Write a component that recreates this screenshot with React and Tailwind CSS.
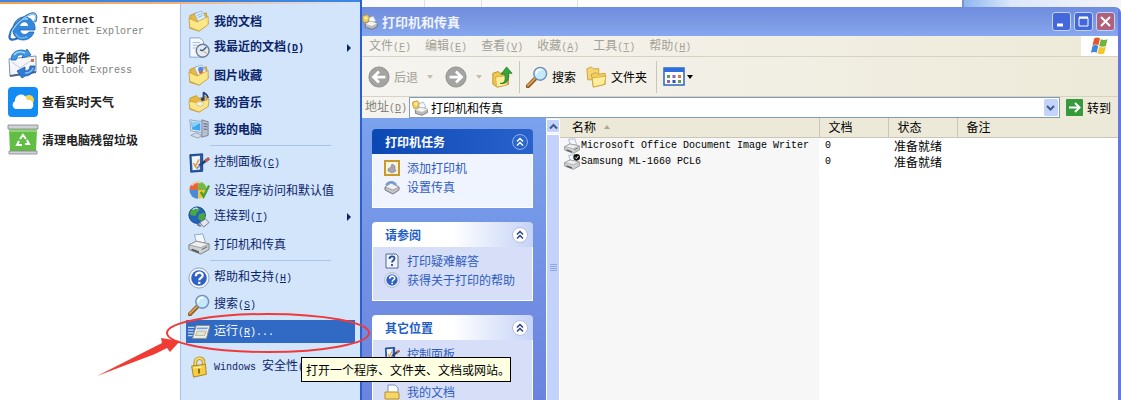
import React from 'react'

const Svg = ({ size = 22, box = 24, className = '', children }) => (
  <svg width={size} height={size} viewBox={`0 0 ${box} ${box}`} fill="none" className={`shrink-0 ${className}`} aria-hidden="true">
    {children}
  </svg>
)

const Key = ({ k }) => (
  <span className="font-['Liberation_Mono',monospace] text-[10px]">(<u>{k}</u>)</span>
)

/* ---------- icons ---------- */

const IeIcon = () => (
  <Svg size={32} box={32}>
    <path d="M28 20H13c0 5 7 6 9 2h5c-2 6-7 8-11 8C9 30 5 24 6 18 7 11 12 7 17 7c7 0 12 6 11 13z" fill="#3389dd" stroke="#1f62b4" strokeWidth=".8" />
    <path d="M13 16c1-5 8-5 8 0z" fill="#fff" />
    <path d="M8 16c2-5 6-8 12-7" stroke="#8dcbf8" strokeWidth="2" strokeLinecap="round" />
    <path d="M9 24c2 4 6 5 11 3" stroke="#6cb4f0" strokeWidth="1.500" strokeLinecap="round" />
    <path d="M28 12c3-7 0-11-7-7C13 9 5 17 3 24c-2 6 2 7 8 4" stroke="#2b6db9" strokeWidth="2.200" />
    <path d="M28 11c2-6 0-9-6-6C14 9 6 17 4 24" stroke="#9fd2f7" strokeWidth="1.200" />
  </Svg>
)

const MailIcon = () => (
  <Svg size={32} box={32}>
    <path d="M2 11l27-3v16L3 28z" fill="#f4f6fa" stroke="#7e92b0" />
    <path d="M3 28l26-4" stroke="#4d6488" strokeWidth="2" />
    <path d="M5 14l8 6 13-9" stroke="#c4ccd8" />
    <path d="M24 11h3v3h-3z" fill="#c9774c" />
    <path d="M4 12C4 6 8 2 15 2l4 1 1-2 4 6-9 3 1-3c-4-1-6 1-7 5z" fill="#3f97e8" stroke="#205fb0" strokeWidth=".8" />
    <path d="M7 7c2-3 6-4 11-2" stroke="#a5dafa" strokeWidth="1.400" />
    <path d="M28 18c0 6-5 10-10 10l-3 2-5-7 8-4v4c3 0 5-2 5-5z" fill="#2f7cd6" stroke="#1d55a0" strokeWidth=".8" />
    <path d="M26 20c-1 3-4 5-8 5" stroke="#86c2f4" strokeWidth="1.400" />
  </Svg>
)

const WeatherIcon = () => (
  <Svg size={32} box={32}>
    <rect x="1" y="1" width="30" height="30" rx="4" fill="#128cf3" />
    <circle cx="22" cy="14" r="5" fill="#f5d24a" />
    <path d="M8 23a4.500 4.500 0 0 1 0-8 6 6 0 0 1 12-1 5 5 0 0 1 4 9z" fill="#fff" />
  </Svg>
)

const CleanIcon = () => (
  <Svg size={32} box={32}>
    <path d="M2 5h28l-1 23H3z" fill="#62bd45" />
    <path d="M2 5h28v3H2z" fill="#8fd672" />
    <path d="M1 1h30v4H1z" fill="#cfd2d8" stroke="#81858d" strokeWidth=".8" />
    <path d="M2 27h28v3H2z" fill="#cfd2d8" stroke="#81858d" strokeWidth=".8" />
    <path d="M13 15l3-4 3 4M20 16l2 4h-4M15 21h-5l2-4" stroke="#fff" strokeWidth="2" />
  </Svg>
)

const Folder = ({ children }) => (
  <Svg>
    <path d="M2 6l7-3 2 3 9-3 2 12-10 8L2 20z" fill="#e9b93f" stroke="#b98a25" strokeWidth=".8" />
    {children}
    <path d="M1 9l9 4 12-6 0 9-10 7-10-4z" fill="#fbe787" stroke="#c79a30" strokeWidth=".8" />
  </Svg>
)

const DocsIcon = () => (
  <Folder>
    <path d="M7 4l8-3 5 8-8 6z" fill="#dcecfb" stroke="#86a9cf" strokeWidth=".8" />
    <path d="M10 6l5-2M11 8l5-2" stroke="#7fb3e0" />
  </Folder>
)

const PicturesIcon = () => (
  <Folder>
    <path d="M7 4l8-3 6 8-9 6z" fill="#eef5fd" stroke="#8aa6cc" strokeWidth=".8" />
    <circle cx="14" cy="6" r="3" fill="#4e8ee0" />
    <circle cx="14" cy="9" r="2" fill="#e0603a" />
  </Folder>
)

const MusicIcon = () => (
  <Svg>
    <path d="M2 8l7-3 2 3 9-2 2 10-10 7L2 20z" fill="#e9b93f" stroke="#b98a25" strokeWidth=".8" />
    <path d="M1 11l10 2 12-4-1 8-10 6-10-4z" fill="#fbe787" stroke="#c79a30" strokeWidth=".8" />
    <ellipse cx="13" cy="14" rx="4" ry="2.500" fill="#f4efe0" stroke="#cbb26a" strokeWidth=".7" />
    <path d="M17 9V1c1 3 5 2 5 7" stroke="#27407f" strokeWidth="2" />
    <circle cx="16" cy="9" r="2" fill="#27407f" />
  </Svg>
)

const RecentIcon = () => (
  <Svg>
    <path d="M2 1h11l4 4v17H2z" fill="#f5f9ff" stroke="#7f9fcb" />
    <path d="M5 6h8M5 9h6M5 12h4" stroke="#9db8dc" />
    <circle cx="16" cy="15" r="7" fill="#e4ebf3" stroke="#6e7f95" strokeWidth="1.600" />
    <path d="M16 15l4-4M16 15l-3-1" stroke="#3d5a80" strokeWidth="1.500" />
    <path d="M17 16l4 2" stroke="#e39a45" />
  </Svg>
)

const ComputerIcon = () => (
  <Svg>
    <path d="M15 2l7 2v15l-7 2z" fill="#b8c0cf" stroke="#66718a" strokeWidth=".8" />
    <path d="M17 6l4 1M17 9l4 .5M17 12l4 .5" stroke="#55607a" />
    <path d="M2 2l13 2v12L3 14z" fill="#dbe6f3" stroke="#7d93b5" strokeWidth=".8" />
    <path d="M3.500 4l10 1.500v8.500L4.500 12.500z" fill="#41a5ee" />
    <path d="M4 4l9 1.500-8 5z" fill="#8bd3fb" />
    <path d="M3 19l6-3 6 3-4 3z" fill="#d5dae3" stroke="#848da0" strokeWidth=".8" />
  </Svg>
)

const ControlIcon = ({ size = 22 }) => (
  <Svg size={size}>
    <path d="M2 3l14-1v19L3 22z" fill="#2c5ca8" stroke="#173a77" />
    <path d="M4 5l9-1v15l-8 1z" fill="#eef4fb" />
    <path d="M6 12l2 4 4-8" stroke="#dd9a35" strokeWidth="1.600" />
    <path d="M12 15l11-8" stroke="#27407f" strokeWidth="3" />
    <path d="M19 10l4-3" stroke="#d05b3c" strokeWidth="3" />
    <path d="M9 18l4-3" stroke="#8c97a8" strokeWidth="2" />
  </Svg>
)

const ProgramsIcon = () => (
  <Svg>
    <circle cx="11" cy="12" r="9.500" fill="#e6ecf4" />
    <path d="M11 12V2.500A9.500 9.500 0 0 0 1.500 12z" fill="#e4673a" />
    <path d="M11 12V2.500A9.500 9.500 0 0 1 20.500 12z" fill="#75b944" />
    <path d="M11 12v9.500A9.500 9.500 0 0 1 1.500 12z" fill="#4a8adb" />
    <path d="M11 12v9.500A9.500 9.500 0 0 0 20.500 12z" fill="#f3c43b" />
    <path d="M4 7a9 9 0 0 1 10-3" stroke="#fff" strokeOpacity=".6" strokeWidth="2" />
    <path d="M14 14l3 5 6-12" stroke="#46a037" strokeWidth="2.600" />
  </Svg>
)

const GlobeIcon = () => (
  <Svg>
    <circle cx="10" cy="10" r="9" fill="#2362bd" stroke="#173f86" />
    <path d="M4 4c4-3 7-2 9 0l-3 3-2 4-5-1-1-3zM12 9l6-2 1 5-4 5-4-3z" fill="#49a83c" />
    <path d="M5 4c2-2 4-2 6-1" stroke="#b7e6f8" strokeWidth="1.500" />
    <path d="M13 18l6-4 4 4-6 5z" fill="#e2e6ee" stroke="#6d7789" />
    <path d="M10 20l4 2" stroke="#6d7789" strokeWidth="2" />
  </Svg>
)

const PrinterIcon = ({ size = 22, checked = false }) => (
  <Svg size={size}>
    <path d="M7 2l9-1 3 9-9 3z" fill="#f2f8ff" stroke="#8ea3bd" />
    <path d="M1 13l8-4 14 3v6l-9 5L1 18z" fill="#cfd2d4" stroke="#777a7d" />
    <path d="M1 13l8-4 14 3-9 4z" fill="#efefec" stroke="#8a8c8d" strokeWidth=".8" />
    <path d="M4 17l8 3v2l-8-3z" fill="#5a5d60" />
    {!checked && <path d="M15 18l6-3" stroke="#777a7d" strokeWidth="1.500" />}
    {checked && <circle cx="19" cy="5" r="5" fill="#111" />}
    {checked && <path d="M16.500 5l2 2 3-4" stroke="#fff" strokeWidth="1.500" />}
  </Svg>
)

const PrinterFaxIcon = ({ size = 16 }) => (
  <Svg size={size}>
    <path d="M9 6l8-3 4 8-9 3z" fill="#f2f8ff" stroke="#8ea3bd" />
    <path d="M5 15l7-4 11 3v5l-8 4-10-3z" fill="#b9bbbc" stroke="#5d5f60" />
    <path d="M5 15l7-4 11 3-8 4z" fill="#f3f3f0" />
    <path d="M1 3l7-2 3 4-2 7-6 1-2-5z" fill="#f2cf58" stroke="#b88a2a" />
    <circle cx="6" cy="6" r="2" fill="#fff6cf" />
  </Svg>
)

const HelpIcon = ({ size = 22 }) => (
  <Svg size={size}>
    <circle cx="12" cy="12" r="11" fill="#f4f7fd" stroke="#8c9dbd" />
    <circle cx="12" cy="12" r="8.500" fill="#2f62c4" />
    <path d="M8.500 10c0-5 7.500-5 7.500-.8 0 2.800-3.700 2.600-3.700 5.300M12.300 16v2.500" stroke="#fff" strokeWidth="2.400" />
  </Svg>
)

const SearchIcon = () => (
  <Svg>
    <path d="M2 22l8-8" stroke="#8f5b25" strokeWidth="4.500" strokeLinecap="round" />
    <path d="M2 21.500l8-8" stroke="#e0a251" strokeWidth="2" strokeLinecap="round" />
    <circle cx="15.500" cy="8.500" r="7" fill="#c6e8fb" stroke="#6f8fbb" strokeWidth="1.600" />
    <path d="M11 8a5 5 0 0 1 5-4" stroke="#fff" strokeWidth="2" strokeLinecap="round" />
  </Svg>
)

const RunIcon = () => (
  <Svg>
    <path d="M9 5h15l-4 14H5z" fill="#f5f4ea" stroke="#8d8d80" />
    <path d="M10 7h12l-1 2H9z" fill="#6fa1e6" />
    <path d="M10 11h10l-2 5H8z" fill="#e4e2d2" stroke="#a3a190" strokeWidth=".8" />
    <path d="M0 7h7M0 10h6M0 13h6M0 16h5" stroke="#c9d8f2" strokeWidth="1.400" />
  </Svg>
)

const LockIcon = () => (
  <Svg>
    <path d="M8 11V7c0-6 9-6 9-.5V10" stroke="#b98c1d" strokeWidth="4" />
    <path d="M8 11V7c0-6 9-6 9-.5V10" stroke="#f6dc6a" strokeWidth="2" />
    <path d="M4 11l15-2 1 11-14 3z" fill="#f3cd42" stroke="#a87d17" />
    <path d="M6 13l9-1" stroke="#fdf1a6" strokeWidth="1.500" />
    <path d="M12 14v5" stroke="#8a6410" strokeWidth="2" />
  </Svg>
)

const NavArrow = ({ flip = false }) => (
  <Svg size={22} className={flip ? 'rotate-180' : ''}>
    <circle cx="12" cy="12" r="11" fill="#a4a4a2" stroke="#8d8d8b" />
    <path d="M19 12H7M12 6l-6 6 6 6" stroke="#fff" strokeWidth="3" />
  </Svg>
)

const UpFolderIcon = () => (
  <Svg>
    <path d="M2 8l6-2 2 2 9-2v14l-12 3-5-3z" fill="#f0c84f" stroke="#b98f2b" />
    <path d="M5 12l15-2-3 11-11 2z" fill="#fdee9c" stroke="#c9a23d" strokeWidth=".8" />
    <path d="M10 19c6 0 6-5 5-10h-4l6-8 6 7h-4c1 8-2 12-9 11z" fill="#35a839" stroke="#1d7423" strokeWidth=".8" />
  </Svg>
)

const FoldersIcon = () => (
  <Svg>
    <path d="M2 3l5-2 2 2 6 0v12H3z" fill="#f5d672" stroke="#cba23c" />
    <path d="M7 9l5-2 2 2 8-1v12l-13 3z" fill="#f3ce5e" stroke="#cba23c" />
    <path d="M8 13l15-2-2 9-12 3z" fill="#fdee9c" stroke="#c9a23d" strokeWidth=".8" />
  </Svg>
)

const ViewsIcon = () => (
  <Svg size={22} box={22}>
    <rect x="1" y="2" width="20" height="17" fill="#fff" stroke="#2c63bd" strokeWidth="1.500" />
    <path d="M1 2h20v4H1z" fill="#2d6fdc" />
    <path d="M4 9h3v3H4zM15 14h3v3h-3z" fill="#5b9a60" />
    <path d="M9.500 9h3v3h-3zM4 14h3v3H4z" fill="#8b66b8" />
    <path d="M15 9h3v3h-3z" fill="#d57a48" />
    <path d="M9.500 14h3v3h-3z" fill="#2b55b4" />
  </Svg>
)

const FlagIcon = () => (
  <Svg size={20}>
    <path d="M5 3c3-2 5-1 7 0l-2 8c-2-1-4-1-7 0z" fill="#e8562c" />
    <path d="M13 4c3 1 5 1 8 0l-2 8c-3 1-5 1-8 0z" fill="#6fb53c" />
    <path d="M3 12c3-2 5-1 7 0l-2 8c-2-1-4-1-7 0z" fill="#3f86dd" />
    <path d="M11 13c3 1 5 1 8 0l-2 8c-3 1-5 1-8 0z" fill="#f5c52e" />
  </Svg>
)

const AddPrinterIcon = () => (
  <Svg size={16} box={16}>
    <rect x="1" y="1" width="14" height="14" fill="#f8f3df" stroke="#c79a2b" strokeWidth="2" />
    <path d="M4 9l3-2 1-3 3 2v3l1 2-4 2-4-2z" fill="#a9a3b4" stroke="#817a8a" strokeWidth=".6" />
  </Svg>
)

const FaxIcon = () => (
  <Svg size={16} box={16}>
    <path d="M1 8l6-4 8 4v3l-6 4-8-4z" fill="#c3c5ca" stroke="#77797f" />
    <path d="M1 8l6-4 8 4-6 3z" fill="#f1f1f1" stroke="#8b8d92" strokeWidth=".7" />
    <path d="M2 6c3-4 8-4 10 0" stroke="#7396d8" strokeWidth="2" />
  </Svg>
)

const HelpPageIcon = () => (
  <Svg size={16} box={16}>
    <path d="M2 1h10l2 2v12H2z" fill="#eef5ff" stroke="#56698c" />
    <path d="M5.500 6c0-3.500 5-3.500 5-.5 0 2-2.500 2-2.500 4M8 11v2" stroke="#244b96" strokeWidth="1.800" />
  </Svg>
)

const DocFolderIcon = () => (
  <Svg size={16} box={16}>
    <path d="M4 1h7l3 3v9H4z" fill="#fff" stroke="#7994c0" />
    <path d="M1 8h12l2 1v6H1z" fill="#f5d767" stroke="#b98f2b" />
  </Svg>
)

const Chevrons = ({ dark = false }) => (
  <Svg size={18} box={18}>
    <circle cx="9" cy="9" r="7.500" fill={dark ? '#2c66cd' : '#fff'} stroke={dark ? '#8fb1ee' : '#b4bedc'} />
    <path d="M6 8.500l3-3 3 3M6 12.500l3-3 3 3" stroke={dark ? '#fff' : '#27407f'} strokeWidth="1.500" />
  </Svg>
)

const Caret = ({ className = 'text-black' }) => (
  <svg width="6" height="4" viewBox="0 0 6 4" className={`shrink-0 ${className}`} aria-hidden="true">
    <path d="M0 0h6L3 4z" fill="currentColor" />
  </svg>
)

/* ---------- start menu ---------- */

const pinned = [
  { Icon: IeIcon, title: 'Internet', sub: 'Internet Explorer', latin: true },
  { Icon: MailIcon, title: '电子邮件', sub: 'Outlook Express' },
  { Icon: WeatherIcon, title: '查看实时天气' },
  { Icon: CleanIcon, title: '清理电脑残留垃圾' },
]

const places = [
  { Icon: DocsIcon, label: '我的文档' },
  { Icon: RecentIcon, label: '我最近的文档', k: 'D', more: true },
  { Icon: PicturesIcon, label: '图片收藏' },
  { Icon: MusicIcon, label: '我的音乐' },
  { Icon: ComputerIcon, label: '我的电脑' },
]

const settings = [
  { Icon: ControlIcon, label: '控制面板', k: 'C' },
  { Icon: ProgramsIcon, label: '设定程序访问和默认值' },
  { Icon: GlobeIcon, label: '连接到', k: 'T', more: true },
  { Icon: PrinterIcon, label: '打印机和传真' },
]

const tools = [
  { Icon: HelpIcon, label: '帮助和支持', k: 'H' },
  { Icon: SearchIcon, label: '搜索', k: 'S' },
  { Icon: RunIcon, label: '运行', k: 'R', tail: '...', active: true },
]

const MenuRow = ({ Icon, label, k, tail, more, active, bold }) => (
  <li className="flex h-[27px] items-center">
    <button
      type="button"
      className={`flex h-[23px] w-full items-center gap-1 whitespace-nowrap pl-[2px] pr-1 ${active ? 'bg-[#316ac5] text-white' : 'text-[#0a246a]'} ${bold ? 'font-bold' : ''}`}
    >
      <Icon />
      <span>
        {label}
        {k && <Key k={k} />}
        {tail && <span className="font-['Liberation_Mono',monospace] text-[10px]">{tail}</span>}
      </span>
      {more && (
        <svg width="4" height="8" viewBox="0 0 4 8" className="ml-auto" aria-hidden="true">
          <path d="M0 0l4 4-4 4z" fill="#0a246a" />
        </svg>
      )}
    </button>
  </li>
)

const Divider = () => (
  <li className="flex h-[7px] items-center px-6">
    <hr className="w-full border-[#a9c4e8]" />
  </li>
)

const StartMenu = () => (
  <aside className="relative flex w-[362px] shrink-0 flex-col border-r-2 border-[#2b5fd0] bg-white">
    <div className="h-[2px] bg-[#3d87e4]" />
    <div className="h-[2px] bg-linear-to-r from-[#f0a050] via-[#f3b27a] to-[#d3e5fa]" />
    <div className="flex flex-1">
      <ul className="flex flex-1 flex-col gap-[6px] pl-[7px] pt-[6px]">
        {pinned.map(({ Icon, title, sub, latin }) => (
          <li key={title}>
            <button type="button" className="flex h-8 items-center gap-[3px] whitespace-nowrap text-left">
              <Icon />
              <span className="flex flex-col">
                <span className={latin ? "font-['Liberation_Mono',monospace] text-[11px] leading-3 font-bold text-[#222]" : 'text-xs leading-[14px] font-bold text-[#222]'}>
                  {title}
                </span>
                {sub && <span className="font-['Liberation_Mono',monospace] text-[10px] leading-3 text-[#808080]">{sub}</span>}
              </span>
            </button>
          </li>
        ))}
      </ul>
      <ul className="w-[180px] border-l border-[#a5c2e8] bg-[#d3e5fa] pl-[5px] pr-[5px] pt-[3px]">
        {places.map((p) => <MenuRow key={p.label} {...p} bold />)}
        <Divider />
        {settings.map((p) => <MenuRow key={p.label} {...p} />)}
        <Divider />
        {tools.map((p) => <MenuRow key={p.label} {...p} />)}
        <li className="flex h-[35px] items-end">
          <button type="button" className="flex h-[27px] items-center gap-1 whitespace-nowrap pl-[2px] text-[#0a246a]">
            <LockIcon />
            <span>
              <span className="font-['Liberation_Mono',monospace] text-[10px]">Windows </span>
              安全性
              <span className="font-['Liberation_Mono',monospace] text-[10px]">(</span>
            </span>
          </button>
        </li>
      </ul>
    </div>

    {/* red marker around the Run entry */}
    <svg width="280" height="90" viewBox="0 0 280 90" fill="none" className="pointer-events-none absolute left-[94px] top-[305px] z-20" aria-hidden="true">
      <ellipse cx="174" cy="28" rx="101" ry="19" stroke="#ee3a3a" strokeWidth="2" />
      <path d="M3 71L68 38l-1-5 19 3-10 11-3-4-12 6z" fill="#f03c34" />
    </svg>
    <div role="tooltip" className="absolute left-[301px] top-[357px] z-30 flex h-[25px] items-center whitespace-nowrap border border-black bg-[#ffffe1] pl-1 text-black">
      打开一个程序、文件夹、文档或网站。
    </div>
  </aside>
)

/* ---------- printers window ---------- */

const menus = [['文件', 'F'], ['编辑', 'E'], ['查看', 'V'], ['收藏', 'A'], ['工具', 'T'], ['帮助', 'H']]

const groups = [
  { title: '打印机任务', dark: true, items: [[AddPrinterIcon, '添加打印机'], [FaxIcon, '设置传真']] },
  { title: '请参阅', items: [[HelpPageIcon, '打印疑难解答'], [HelpIcon, '获得关于打印的帮助']] },
  { title: '其它位置', items: [[ControlIcon, '控制面板'], [PrinterFaxIcon, ''], [DocFolderIcon, '我的文档']] },
]

const printers = [
  { name: 'Microsoft Office Document Image Writer', docs: 0, status: '准备就绪' },
  { name: 'Samsung ML-1660 PCL6', docs: 0, status: '准备就绪', checked: true },
]

const TaskGroup = ({ title, dark, items }) => (
  <section className="shrink-0 overflow-hidden rounded-t">
    <h2 className={`flex h-[25px] items-center justify-between pl-[13px] pr-1 text-xs font-bold ${dark ? 'bg-linear-to-r from-[#0a48b4] to-[#2a62cc] text-white' : 'bg-linear-to-r from-white from-50% to-[#c6d3f7] text-[#215dc6]'}`}>
      {title}
      <button type="button" aria-label={`折叠 ${title}`}><Chevrons dark={dark} /></button>
    </h2>
    <ul className={`border border-t-0 border-white pb-[11px] pl-[11px] pt-1 ${dark ? 'bg-[#f0f4fe]' : 'bg-[#d6dff7]'}`}>
      {items.map(([Icon, label]) => (
        <li key={label} className="h-[19px]">
          <a href="#" className="flex h-[19px] items-center gap-[7px] whitespace-nowrap text-[#2f5cc0]">
            <Icon size={16} />
            {label}
          </a>
        </li>
      ))}
    </ul>
  </section>
)

const ToolSep = () => <div className="h-8 w-px bg-[#c9c6b6]" />

const PrintersWindow = () => (
  <main className="flex min-h-0 flex-1 flex-col overflow-hidden rounded-tr-md border-r-[3px] border-[#6678dc] bg-[#ece9d8]">
    <header className="flex h-[29px] shrink-0 items-center gap-1 bg-linear-to-b from-[#6f8ce0] via-[#7b98e3] to-[#86a8f0] pr-[3px] text-white">
      <PrinterFaxIcon />
      <h1 className="flex-1 text-[13px] font-bold text-[#eef3ff]">打印机和传真</h1>
      <div className="flex gap-[3px]">
        <button type="button" aria-label="最小化" className="rounded-[3px] border border-[#c3d2f8] bg-[#4468dc]">
          <Svg size={17} box={17}><path d="M4 12h6" stroke="#fff" strokeWidth="3" /></Svg>
        </button>
        <button type="button" aria-label="最大化" className="rounded-[3px] border border-[#c3d2f8] bg-[#4468dc]">
          <Svg size={17} box={17}><path d="M4 5h9v8H4z" stroke="#fff" /><path d="M4 4.500h9" stroke="#fff" strokeWidth="2" /></Svg>
        </button>
        <button type="button" aria-label="关闭" className="rounded-[3px] border border-[#c3d2f8] bg-[#b0627c]">
          <Svg size={17} box={17}><path d="M4 4l9 9M13 4l-9 9" stroke="#fff" strokeWidth="2" /></Svg>
        </button>
      </div>
    </header>

    <nav className="flex h-[21px] shrink-0 items-stretch border-b border-[#d6d3c4] bg-linear-to-r from-[#f5f4f0] to-[#eeead9] text-[#a3a196]">
      <div className="flex flex-1 items-center gap-[14px] whitespace-nowrap pl-[7px]">
        {menus.map(([label, k]) => (
          <button type="button" key={k}>{label}<Key k={k} /></button>
        ))}
      </div>
      <div className="flex w-[37px] items-center justify-center bg-white"><FlagIcon /></div>
    </nav>

    <div className="flex h-10 shrink-0 items-center whitespace-nowrap border-b border-[#d6d3c4] bg-linear-to-r from-[#f5f4f0] to-[#eeead9] pl-[6px] text-black">
      <button type="button" disabled className="flex items-center gap-1 text-[#a3a196]">
        <NavArrow />后退
      </button>
      <Caret className="ml-[9px] text-[#c4bfae]" />
      <button type="button" disabled aria-label="前进" className="ml-3"><NavArrow flip /></button>
      <Caret className="ml-[9px] text-[#c4bfae]" />
      <button type="button" aria-label="向上" className="ml-[9px] mr-[6px]"><UpFolderIcon /></button>
      <ToolSep />
      <button type="button" className="ml-[6px] flex items-center gap-1"><SearchIcon />搜索</button>
      <button type="button" className="ml-[9px] mr-[9px] flex items-center gap-1"><FoldersIcon />文件夹</button>
      <ToolSep />
      <button type="button" aria-label="查看方式" className="ml-[6px] flex items-center gap-[2px]"><ViewsIcon /><Caret /></button>
    </div>

    <div className="flex h-[21px] shrink-0 items-center whitespace-nowrap bg-linear-to-r from-[#f5f4f0] to-[#eeead9] pl-[3px] text-black">
      <label htmlFor="address" className="w-[44px] text-[#85837a]">地址<Key k="D" /></label>
      <div className="relative flex h-[21px] flex-1 items-center border border-[#7f9db9] bg-white pl-[2px]">
        <PrinterFaxIcon />
        <select id="address" className="h-full flex-1 appearance-none bg-transparent pl-[3px] text-xs outline-none">
          <option>打印机和传真</option>
        </select>
        <span className="pointer-events-none absolute right-[1px] flex h-[17px] w-[14px] items-center justify-center rounded-[2px] bg-[#c3d3fb]">
          <Svg size={9} box={9}><path d="M1 3l3.500 3.500L8 3" stroke="#3f5a8c" strokeWidth="2" /></Svg>
        </span>
      </div>
      <button type="button" className="ml-[6px] mr-[7px] flex items-center gap-1">
        <Svg size={17} box={17}>
          <rect width="17" height="17" rx="1" fill="#359a3a" />
          <path d="M3 8.500h10M9 4l4.500 4.500L9 13" stroke="#fff" strokeWidth="2" />
        </Svg>
        转到
      </button>
    </div>

    <div className="flex min-h-0 flex-1">
      <div className="flex w-[184px] shrink-0 flex-col gap-[14px] overflow-hidden bg-linear-to-b from-[#7ba2ec] to-[#6b83de] pl-[10px] pr-[13px] pt-[11px]">
        {groups.map((g) => <TaskGroup key={g.title} {...g} />)}
      </div>

      {/* scrollbar */}
      <div className="flex w-[14px] shrink-0 flex-col gap-px bg-[#eef2fd] pt-[1px]">
        <div className="flex h-[14px] items-center justify-center rounded-[2px] border border-white bg-[#c3d3fb]">
          <Svg size={9} box={9}><path d="M1 6.500L4.500 3 8 6.500" stroke="#3f5a8c" strokeWidth="2" /></Svg>
        </div>
        <div className="flex flex-1 flex-col items-center justify-center gap-px rounded-t-[2px] border border-b-0 border-white bg-[#c3d3fb]">
          <span className="h-px w-[7px] bg-[#8fa9e8]" />
          <span className="h-px w-[7px] bg-[#8fa9e8]" />
          <span className="h-px w-[7px] bg-[#8fa9e8]" />
          <span className="h-px w-[7px] bg-[#8fa9e8]" />
        </div>
      </div>

      <div className="min-w-0 flex-1 bg-white">
        <table className="h-full w-full table-fixed whitespace-nowrap text-left text-black">
          <colgroup>
            <col className="w-[259px] bg-[#f7f7f7]" />
            <col className="w-[69px]" />
            <col className="w-[69px]" />
            <col />
          </colgroup>
          <thead>
            <tr className="h-[19px] border-b border-[#cbc7b8] bg-[#ece9d8]">
              <th className="border-r border-[#cbc7b8] p-0 pl-3 font-normal">
                <span className="flex items-center gap-2">
                  名称
                  <Caret className="rotate-180 text-[#aca899]" />
                </span>
              </th>
              <th className="border-r border-[#cbc7b8] p-0 pl-[9px] font-normal">文档</th>
              <th className="border-r border-[#cbc7b8] p-0 pl-[9px] font-normal">状态</th>
              <th className="p-0 pl-[9px] font-normal">备注</th>
            </tr>
          </thead>
          <tbody>
            {printers.map((p) => (
              <tr key={p.name} className="h-4">
                <td className="p-0 pl-1">
                  <span className="flex h-4 items-center gap-px font-['Liberation_Mono',monospace] text-[10px]">
                    <PrinterIcon size={16} checked={p.checked} />
                    {p.name}
                  </span>
                </td>
                <td className="p-0 pl-[6px] font-['Liberation_Mono',monospace] text-[10px] leading-4">{p.docs}</td>
                <td className="p-0 pl-[6px]">{p.status}</td>
                <td />
              </tr>
            ))}
            <tr><td /><td /><td /><td /></tr>
          </tbody>
        </table>
      </div>
    </div>
  </main>
)

const App = () => (
  <div className="flex h-screen overflow-hidden bg-[#fbfbfd] font-['Noto_Sans_CJK_SC',sans-serif] text-xs leading-4">
    <StartMenu />
    <div className="flex min-w-0 flex-1 flex-col">
      <div className="flex h-[7px] shrink-0">
        <div className="w-[63px] border-r border-[#dcdfe8]" />
        <div className="w-[57px] border-r border-[#dcdfe8]" />
        <div className="w-[96px] border-r border-[#dcdfe8]" />
        <div className="flex-1 border-r-2 border-[#7f93bd] bg-white" />
        <div className="w-[157px] bg-linear-to-r from-[#8fb6f0] via-[#dbe7fa] via-30% to-[#f4f4f8]" />
      </div>
      <PrintersWindow />
    </div>
  </div>
)

export default App
